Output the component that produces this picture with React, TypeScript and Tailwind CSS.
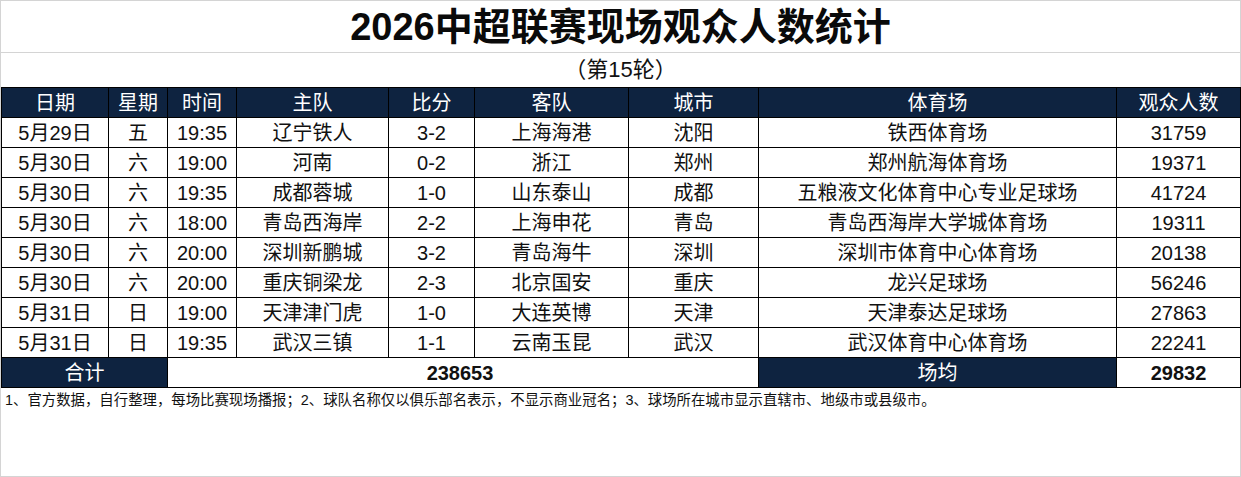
import React from "react";

// ===== Data =====
const HEADERS = ["日期", "星期", "时间", "主队", "比分", "客队", "城市", "体育场", "观众人数"];
const COL_WIDTHS = [107, 59, 69, 152, 86, 154, 130, 358, 124];

const ROWS: string[][] = [
  ["5月29日", "五", "19:35", "辽宁铁人", "3-2", "上海海港", "沈阳", "铁西体育场", "31759"],
  ["5月30日", "六", "19:00", "河南", "0-2", "浙江", "郑州", "郑州航海体育场", "19371"],
  ["5月30日", "六", "19:35", "成都蓉城", "1-0", "山东泰山", "成都", "五粮液文化体育中心专业足球场", "41724"],
  ["5月30日", "六", "18:00", "青岛西海岸", "2-2", "上海申花", "青岛", "青岛西海岸大学城体育场", "19311"],
  ["5月30日", "六", "20:00", "深圳新鹏城", "3-2", "青岛海牛", "深圳", "深圳市体育中心体育场", "20138"],
  ["5月30日", "六", "20:00", "重庆铜梁龙", "2-3", "北京国安", "重庆", "龙兴足球场", "56246"],
  ["5月31日", "日", "19:00", "天津津门虎", "1-0", "大连英博", "天津", "天津泰达足球场", "27863"],
  ["5月31日", "日", "19:35", "武汉三镇", "1-1", "云南玉昆", "武汉", "武汉体育中心体育场", "22241"],
];

const FONT = "font-['Liberation_Sans','Noto_Sans_CJK_SC',sans-serif]";

export default function App() {
  return (
    <div className={`w-[1241px] h-[477px] bg-white border border-[#d4d4d4] text-[#111] ${FONT}`}>
      {/* Title */}
      <div className="h-[52px] border-b border-[#d4d4d4] flex items-center justify-center">
        <h1 className="text-[38px] font-bold leading-none text-[#0a0a0a]">
          2026中超联赛现场观众人数统计
        </h1>
      </div>
      <div className="h-[34px] flex items-center justify-center text-[22px] leading-none">
        （第15轮）
      </div>

      {/* Table */}
      <table className="border-collapse table-fixed w-[1239px] text-[20px] leading-none">
        <colgroup>
          {COL_WIDTHS.map((w, i) => (
            <col key={i} style={{ width: w }} />
          ))}
        </colgroup>
        <thead>
          <tr className="h-[30px] bg-[#0e2340] text-white">
            {HEADERS.map((h) => (
              <th key={h} className="border border-black font-normal text-center p-0">
                {h}
              </th>
            ))}
          </tr>
        </thead>
        <tbody>
          {ROWS.map((r, i) => (
            <tr key={i} className="h-[30px]">
              {r.map((c, j) => (
                <td key={j} className="border border-black text-center p-0 whitespace-nowrap">
                  {c}
                </td>
              ))}
            </tr>
          ))}
          <tr className="h-[30px]">
            <td colSpan={2} className="border border-black bg-[#0e2340] text-white text-center p-0">
              合计
            </td>
            <td colSpan={5} className="border border-black text-center p-0 pr-[6px] font-bold">
              238653
            </td>
            <td className="border border-black bg-[#0e2340] text-white text-center p-0">场均</td>
            <td className="border border-black text-center p-0 font-bold">29832</td>
          </tr>
        </tbody>
      </table>

      {/* Footnote */}
      <p className="pl-[4px] pt-[3px] text-[14.4px] leading-[18px] text-[#111] whitespace-nowrap">
        1、官方数据，自行整理，每场比赛现场播报；2、球队名称仅以俱乐部名表示，不显示商业冠名；3、球场所在城市显示直辖市、地级市或县级市。
      </p>
    </div>
  );
}
